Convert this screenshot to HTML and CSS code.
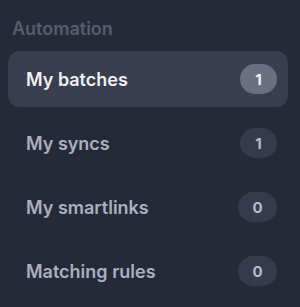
FILE: index.html
```html
<!DOCTYPE html>
<html>
<head>
<meta charset="utf-8">
<link rel="stylesheet" href="styles.css">
</head>
<body>
<nav class="sidebar">
  <div class="section-title">Automation</div>
  <ul class="menu">
    <li class="item active"><span class="label">My batches</span><span class="badge">1</span></li>
    <li class="item"><span class="label">My syncs</span><span class="badge">1</span></li>
    <li class="item"><span class="label">My smartlinks</span><span class="badge">0</span></li>
    <li class="item"><span class="label">Matching rules</span><span class="badge">0</span></li>
  </ul>
</nav>
</body>
</html>
```
FILE: styles.css
```css
html, body {
  margin: 0;
  padding: 0;
  background: #262a38;
  width: 300px;
  height: 307px;
  overflow: hidden;
}
.sidebar {
  padding: 18px 12px 0 8px;
  font-family: Inter, "Noto Sans", sans-serif;
}
.section-title {
  padding-left: 4px;
  font-size: 18px;
  font-weight: 600;
  color: #575d6f;
  line-height: 22px;
}
.menu {
  list-style: none;
  margin: 11px 0 0;
  padding: 0;
  display: flex;
  flex-direction: column;
  gap: 8px;
}
.item {
  height: 56px;
  display: flex;
  align-items: center;
  justify-content: space-between;
  padding: 0 11px 0 18px;
  border-radius: 12px;
  color: #aab0c0;
  font-size: 18px;
  font-weight: 600;
}
.item.active {
  background: #3a3e4e;
  color: #eef0f6;
}
.badge {
  box-sizing: border-box;
  min-width: 37px;
  height: 30px;
  padding: 0 14.5px;
  border-radius: 15px;
  background: #363a4a;
  display: flex;
  align-items: center;
  justify-content: center;
  font-size: 15px;
  font-weight: 700;
  color: #b8bdcb;
}
.item.active .badge {
  background: #6a6f81;
  color: #f2f3f8;
}
```
